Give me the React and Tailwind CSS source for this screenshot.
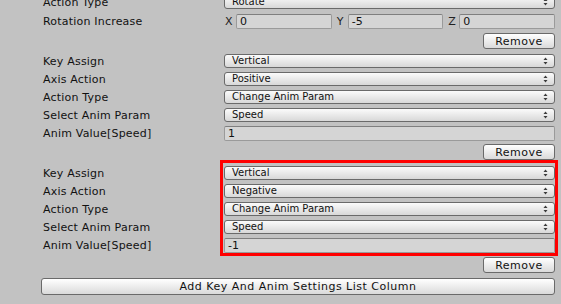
import React from "react";

const font = { fontFamily: '"DejaVu Sans", "Liberation Sans", sans-serif' };

function Arrows() {
  return (
    <svg width="5" height="8" viewBox="0 0 5 8" className="shrink-0">
      <path d="M2.5 0.5 L4.5 3 L0.5 3 Z" fill="#3a3a3a" />
      <path d="M2.5 7.5 L4.5 5 L0.5 5 Z" fill="#3a3a3a" />
    </svg>
  );
}

function Popup({ value }) {
  return (
    <div className="flex-1 h-[14px] flex items-center justify-between pl-[7px] pr-[6px] rounded-[3px] border border-[#6a6a6a] bg-gradient-to-b from-[#fbfbfb] to-[#d8d8d8] text-[10px] leading-none text-[#111]">
      <span>{value}</span>
      <Arrows />
    </div>
  );
}

function Field({ value }) {
  return (
    <div className="flex-1 min-w-0 h-[15px] flex items-center pl-[3px] rounded-[2px] border border-[#9a9a9a] border-t-[#7f7f7f] bg-[#d5d5d5] text-[11px] leading-none text-[#111]">
      {value}
    </div>
  );
}

function Row({ label, children, className = "" }) {
  return (
    <div className={`h-[18px] flex items-center ${className}`}>
      <div className="w-[181px] shrink-0 text-[11px] leading-none text-[#111] tracking-[0.2px]">{label}</div>
      <div className="flex-1 flex items-center min-w-0">{children}</div>
    </div>
  );
}

function Button({ children, className = "" }) {
  return (
    <div className={`flex items-center justify-center rounded-[3px] border border-[#6a6a6a] bg-gradient-to-b from-[#ffffff] to-[#dadada] text-[11px] leading-none text-[#111] tracking-[0.5px] ${className}`}>
      {children}
    </div>
  );
}

function RemoveRow({ className = "" }) {
  return (
    <div className={`h-[18px] flex items-center justify-end ${className}`}>
      <Button className="w-[72px] h-[16px]">Remove</Button>
    </div>
  );
}

function AnimGroup({ axis }) {
  return (
    <>
      <Row label="Key Assign"><Popup value="Vertical" /></Row>
      <Row label="Axis Action"><Popup value={axis} /></Row>
      <Row label="Action Type"><Popup value="Change Anim Param" /></Row>
      <Row label="Select Anim Param"><Popup value="Speed" /></Row>
      <Row label="Anim Value[Speed]"><Field value={axis === "Positive" ? "1" : "-1"} /></Row>
    </>
  );
}

export default function App() {
  return (
    <div className="w-[561px] h-[304px] overflow-hidden bg-[#c2c2c2]" style={font}>
      <div className="pl-[43px] pr-[6px] -mt-[7px] flex flex-col">
        <Row label="Action Type"><Popup value="Rotate" /></Row>
        <Row label="Rotation Increase" className="mt-[1px]">
          <div className="flex-1 grid grid-cols-3 gap-[4px]">
            {[["X", "0"], ["Y", "-5"], ["Z", "0"]].map(([k, v]) => (
              <div key={k} className="flex items-center">
                <span className="w-[12px] shrink-0 pl-[1px] text-[11px] leading-none text-[#222]">{k}</span>
                <Field value={v} />
              </div>
            ))}
          </div>
        </Row>
        <RemoveRow className="mt-[2px]" />

        <div className="mt-[2px] flex flex-col">
          <AnimGroup axis="Positive" />
        </div>
        <RemoveRow className="mt-[1px]" />

        <div className="relative mt-[3px] flex flex-col">
          <AnimGroup axis="Negative" />
          {/* highlight annotation */}
          <div className="absolute left-[177px] -right-[3px] -top-[4px] -bottom-[2px] border-[3px] border-[#ff0000] pointer-events-none" />
        </div>
        <RemoveRow className="mt-[2px]" />

        <div className="mt-[3px] -ml-[2px] h-[18px] flex items-center">
          <Button className="w-full h-[17px]">Add Key And Anim Settings List Column</Button>
        </div>
      </div>
    </div>
  );
}
